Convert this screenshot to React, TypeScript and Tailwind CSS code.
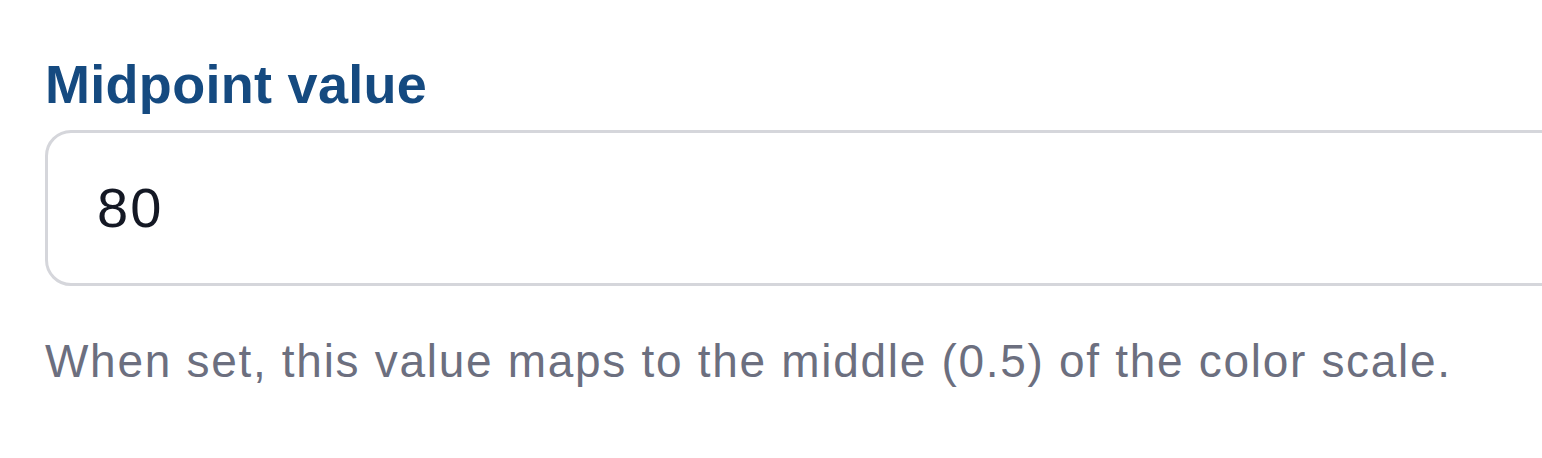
export default function App() {
  return (
    <div className="w-[1542px] h-[458px] overflow-hidden bg-white" style={{ fontFamily: '"Liberation Sans", Arial, sans-serif' }}>
      <div className="flex flex-col pl-[45px] pt-[51px] w-[1620px]">
        <label className="text-[54px] leading-[66px] font-bold text-[#154a80] tracking-[0.3px] ml-[0px]">
          Midpoint value
        </label>
        <div className="mt-[13px] h-[156px] w-[1560px] rounded-[26px] border-[3px] border-[#d5d6db] bg-white flex items-center pl-[49px]">
          <span className="text-[56px] leading-[66px] tracking-[2px] text-[#141824]">80</span>
        </div>
        <p className="mt-[47px] text-[46px] leading-[56px] tracking-[1.7px] text-[#6c6f7f]">
          When set, this value maps to the middle (0.5) of the color scale.
        </p>
      </div>
    </div>
  );
}
